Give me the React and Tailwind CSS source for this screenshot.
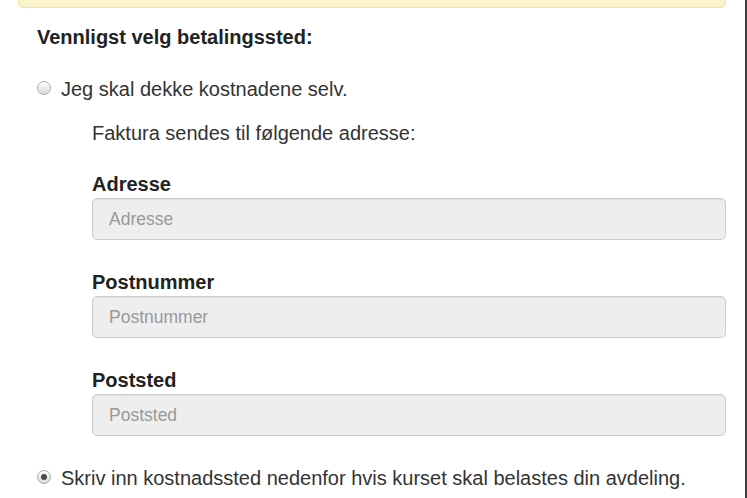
import React from "react";

function Radio({ checked }) {
  return (
    <span className="mt-[6px] flex h-[14px] w-[14px] shrink-0 items-center justify-center rounded-full border border-[#a9a9a9] bg-gradient-to-b from-[#fdfdfd] to-[#dcdcdc] shadow-[inset_0_1px_1px_rgba(255,255,255,0.8)]">
      {checked && <span className="h-[6px] w-[6px] rounded-full bg-[#4a4a4a]" />}
    </span>
  );
}

function Field({ label, first }) {
  return (
    <div className={first ? "mt-[23px]" : "mt-[28px]"}>
      <label className="block text-[20px] font-bold leading-[28px] text-[#222]">{label}</label>
      <input
        type="text"
        disabled
        placeholder={label}
        className="block h-[42px] w-full rounded-[5px] border border-[#cccccc] bg-[#eeeeee] pl-[16px] text-[17.5px] text-[#555] placeholder:text-[#999] shadow-[inset_0_1px_1px_rgba(0,0,0,0.075)]"
        style={{ fontFamily: '"Liberation Sans", Arial, sans-serif' }}
      />
    </div>
  );
}

export default function App() {
  return (
    <div
      className="h-[498px] w-[747px] overflow-hidden border-r-2 border-[#3d3d3d] bg-white text-[#333]"
      style={{ fontFamily: '"Liberation Sans", Arial, sans-serif' }}
    >
      <div className="ml-[18px] w-[708px]">
        {/* Alert box, top cut off */}
        <div className="h-[8px] rounded-b-[5px] border border-t-0 border-[#f3e3a3] bg-[#fbf3c9]" />

        <div className="pl-[19px]">
          <h4 className="mt-[17px] text-[20px] font-bold leading-[24px] text-[#222]">
            Vennligst velg betalingssted:
          </h4>

          <div className="mt-[26px] flex gap-[10px]">
            <Radio />
            <span className="text-[20px] leading-[28px]">Jeg skal dekke kostnadene selv.</span>
          </div>
        </div>

        <div className="pl-[74px]">
          <p className="mt-[16px] text-[20px] leading-[28px]">Faktura sendes til følgende adresse:</p>
          <Field label="Adresse" first />
          <Field label="Postnummer" />
          <Field label="Poststed" />
        </div>

        <div className="mt-[28px] flex gap-[10px] pl-[19px]">
          <Radio checked />
          <span className="text-[20px] leading-[28px]">
            Skriv inn kostnadssted nedenfor hvis kurset skal belastes din avdeling.
          </span>
        </div>
      </div>
    </div>
  );
}
